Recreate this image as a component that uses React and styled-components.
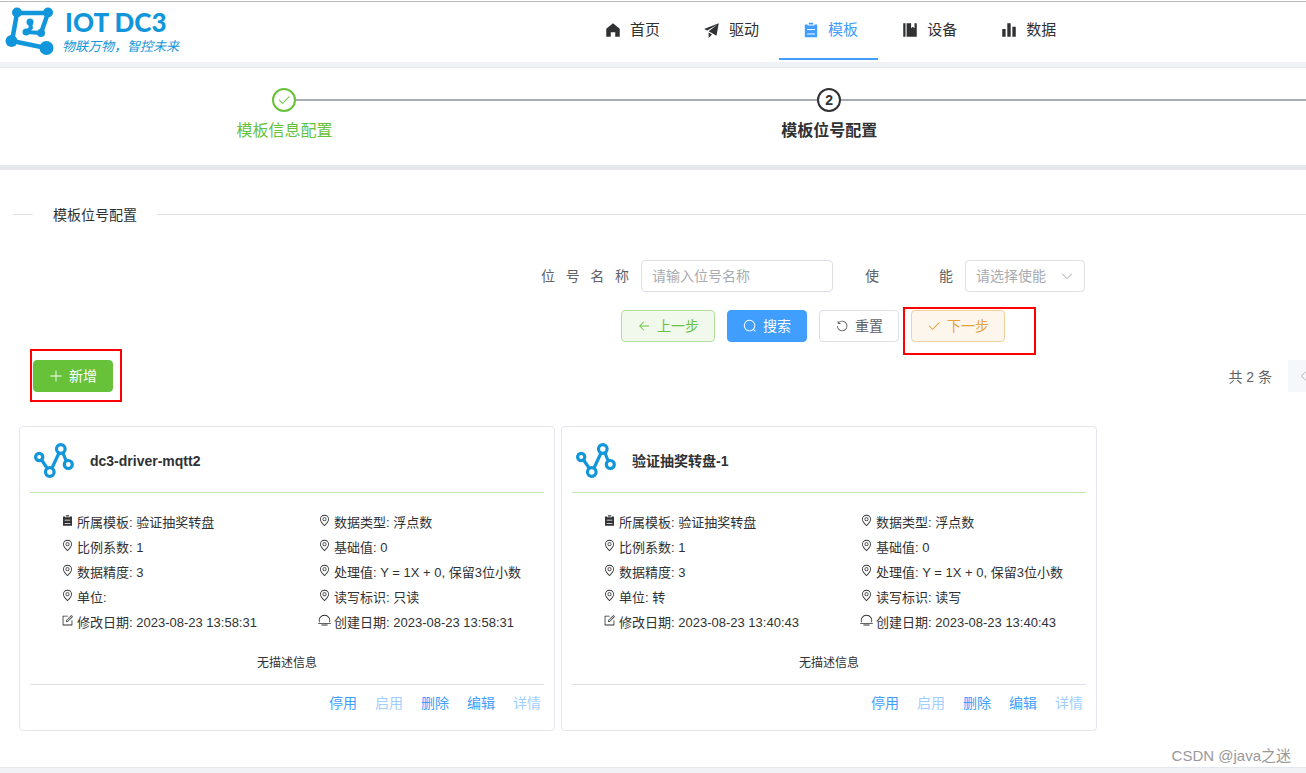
import React, { useState } from "react";
import styled, { createGlobalStyle } from "styled-components";

const GlobalStyle = createGlobalStyle`
  * {
    box-sizing: border-box;
  }

  body {
    margin: 0;
    background-color: #fff;
    color: #303133;
    font-family: "Liberation Sans", "Noto Sans CJK SC", sans-serif;
    font-size: 14px;
    overflow-x: hidden;
  }

  button, input, select {
    font-family: inherit;
    font-size: 14px;
  }
`;

// icon shapes, all on a 1024 grid
const ICONS = {
  home: ["M512 128 128 447.936V896h255.936V640H640v256h255.936V447.936z"],
  promotion: ["m64 448 832-320-128 704-446.08-243.328L832 192 242.816 545.472zm256 512V657.024L512 768z"],
  list: ["M704 192h160v736H160V192h160v64h384zM288 512h448v-64H288zm0 256h448v-64H288zm96-576V96h256v96z"],
  management: ["M576 128v288l96-96 96 96V128h128v768H320V128zm-448 0h128v768H128z"],
  histogram: ["M416 896V128h192v768zm-288 0V448h192v448zm576 0V320h192v576z"],
  check: [
    "M406.656 706.944 195.84 496.256a32 32 0 1 0-45.248 45.248l256 256 512-512a32 32 0 0 0-45.248-45.248L406.592 706.944z",
  ],
  back: [
    "M224 480h640a32 32 0 1 1 0 64H224a32 32 0 0 1 0-64",
    "m237.248 512 265.408 265.344a32 32 0 0 1-45.312 45.312l-288-288a32 32 0 0 1 0-45.312l288-288a32 32 0 1 1 45.312 45.312z",
  ],
  search: [
    "m795.904 750.72 124.992 124.928a32 32 0 0 1-45.248 45.248L750.656 795.904a416 416 0 1 1 45.248-45.248zM480 832a352 352 0 1 0 0-704 352 352 0 0 0 0 704",
  ],
  refresh: [
    "M289.088 296.704h92.992a32 32 0 0 1 0 64H232.96a32 32 0 0 1-32-32V179.712a32 32 0 0 1 64 0v50.56a384 384 0 0 1 643.84 282.88 384 384 0 0 1-383.936 384 384 384 0 0 1-384-384h64a320 320 0 1 0 640 0 320 320 0 0 0-555.712-216.448z",
  ],
  plus: ["M480 480V128a32 32 0 0 1 64 0v352h352a32 32 0 1 1 0 64H544v352a32 32 0 1 1-64 0V544H128a32 32 0 0 1 0-64z"],
  arrowDown: [
    "M831.872 340.864 512 652.672 192.128 340.864a30.592 30.592 0 0 0-42.752 0 29.12 29.12 0 0 0 0 41.6L489.664 714.24a32 32 0 0 0 44.672 0l340.288-331.712a29.12 29.12 0 0 0 0-41.728 30.592 30.592 0 0 0-42.752 0z",
  ],
  arrowLeft: [
    "M609.408 149.376 277.76 489.6a32 32 0 0 0 0 44.672l331.648 340.352a29.12 29.12 0 0 0 41.728 0 30.592 30.592 0 0 0 0-42.752L339.264 511.936l311.872-319.872a30.592 30.592 0 0 0 0-42.688 29.12 29.12 0 0 0-41.728 0z",
  ],
  location: [
    "M800 416a288 288 0 1 0-576 0c0 118.144 94.528 272.128 288 456.576C705.472 688.128 800 534.144 800 416M512 960C277.312 746.688 160 565.312 160 416a352 352 0 0 1 704 0c0 149.312-117.312 330.688-352 544",
    "M512 512a96 96 0 1 0 0-192 96 96 0 0 0 0 192m0 64a160 160 0 1 1 0-320 160 160 0 0 1 0 320",
  ],
  edit: [
    "M832 512a32 32 0 1 1 64 0v352a32 32 0 0 1-32 32H160a32 32 0 0 1-32-32V160a32 32 0 0 1 32-32h352a32 32 0 0 1 0 64H192v640h640z",
    "m469.952 554.24 52.8-7.552L847.104 222.4a32 32 0 1 0-45.248-45.248L477.44 501.44l-7.552 52.8zm422.4-422.4a96 96 0 0 1 0 135.808l-331.84 331.84a32 32 0 0 1-18.112 9.088L436.8 623.68a32 32 0 0 1-36.224-36.224l15.104-105.6a32 32 0 0 1 9.024-18.112l331.904-331.84a96 96 0 0 1 135.744 0z",
  ],
  sunset: [
    "M82.56 640a448 448 0 1 1 858.88 0h-67.2a384 384 0 1 0-724.288 0zM32 704h960q32 0 32 32t-32 32H32q-32 0-32-32t32-32m256 128h448q32 0 32 32t-32 32H288q-32 0-32-32t32-32",
  ],
};

const Icon = ({ name, size = 14 }) => (
  <svg width={size} height={size} viewBox="0 0 1024 1024" fill="currentColor" aria-hidden="true">
    {ICONS[name].map((d) => (
      <path key={d} d={d} />
    ))}
  </svg>
);

// ---------- header ----------
const Header = styled.header`
  display: flex;
  align-items: flex-start;
  justify-content: space-between;
  height: 61px;
  margin-top: 1px;
  border-top: 1px solid #b9b9b9;
`;

const Brand = styled.a`
  display: flex;
  gap: 8px;
  padding: 5px 0 0 5px;
  color: #1296db;
  text-decoration: none;
`;

const BrandText = styled.span`
  display: flex;
  flex-direction: column;
`;

const BrandName = styled.span`
  padding-left: 3px;
  font-family: Lato, sans-serif;
  font-size: 26px;
  font-weight: 900;
  line-height: 30px;
`;

const BrandSlogan = styled.span`
  font-family: "Noto Sans CJK SC", sans-serif;
  font-size: 13px;
  font-style: italic;
  font-weight: 400;
  line-height: 18px;
  white-space: nowrap;
`;

const Nav = styled.nav`
  display: flex;
  margin-right: 17.6%;
`;

const NavLink = styled.a`
  display: flex;
  align-items: center;
  height: 58px;
  padding: 0 20px;
  border-bottom: 2px solid ${(props) => (props.$active ? "#409eff" : "transparent")};
  color: ${(props) => (props.$active ? "#409eff" : "#303133")};
  font-size: 15px;
  text-decoration: none;
`;

const NavIcon = styled.span`
  display: flex;
  justify-content: center;
  width: 24px;
  margin-right: 5px;
`;

const NavText = styled.span`
  padding-bottom: 3px;
`;

const Band = styled.div`
  height: ${(props) => (props.$strong ? "5px" : "6px")};
  background-color: ${(props) => (props.$strong ? "#e6e8eb" : "#f0f2f5")};
  border-bottom: ${(props) => (props.$strong ? "none" : "1px solid #e4e7ed")};
`;

const PageEnd = styled.div`
  height: 6px;
  background-color: #f0f2f5;
  border-top: 1px solid #e4e7ed;
`;

// ---------- steps ----------
const Steps = styled.ol`
  display: grid;
  grid-template-columns: 42.1% 42.1% 1fr;
  margin: 0;
  padding: 20px 0 15px 12px;
  list-style: none;
`;

const Step = styled.li`
  color: ${(props) => (props.$done ? "#67c23a" : "#303133")};
  font-weight: ${(props) => (props.$done ? 400 : 700)};
`;

const StepHead = styled.div`
  display: flex;
  align-items: center;
  height: 24px;
`;

const StepLine = styled.span`
  flex: 1;
  height: 2px;
  background-color: ${(props) => (props.$hidden ? "transparent" : "#a8abb2")};
`;

const StepCircle = styled.span`
  display: flex;
  align-items: center;
  justify-content: center;
  width: 24px;
  height: 24px;
  border: 2px solid currentColor;
  border-radius: 50%;
  font-size: 14px;
`;

const StepTitle = styled.div`
  font-size: 16px;
  line-height: 38px;
  text-align: center;
`;

// ---------- content ----------
const Content = styled.main`
  padding: 34px 0 36px;
`;

const SectionTitle = styled.h2`
  display: flex;
  align-items: center;
  gap: 20px;
  margin: 0 0 34px 13px;
  font-size: 14px;
  font-weight: 400;
  line-height: 22px;

  &::before,
  &::after {
    content: "";
    width: 20px;
    height: 1px;
    margin-bottom: 2px;
    background-color: #dcdfe6;
  }

  &::after {
    flex: 1;
  }
`;

const SearchForm = styled.form`
  display: flex;
  flex-direction: column;
  align-items: center;
  gap: 18px;
  padding-left: 24.5%;
`;

const FormRow = styled.div`
  display: flex;
  gap: ${(props) => props.$gap};
`;

const Field = styled.div`
  display: flex;
  gap: 12px;
`;

const Label = styled.label`
  width: 88px;
  color: #606266;
  line-height: 32px;
  text-align: justify;
  text-align-last: justify;
`;

const TextInput = styled.input`
  width: 192px;
  height: 32px;
  padding: 0 10px;
  border: 1px solid #dcdfe6;
  border-radius: 4px;
  outline: none;

  &::placeholder {
    color: #a8abb2;
  }
`;

const SelectBox = styled.div`
  position: relative;
  color: #a8abb2;

  svg {
    position: absolute;
    top: 9px;
    right: 11px;
    pointer-events: none;
  }
`;

const Select = styled.select`
  appearance: none;
  width: 120px;
  height: 32px;
  padding: 0 10px;
  border: 1px solid #dcdfe6;
  border-radius: 4px;
  background-color: #fff;
  color: #a8abb2;
`;

const VARIANTS = {
  back: { color: "#67c23a", background: "#f0f9eb", border: "#b3e19d" },
  primary: { color: "#fff", background: "#409eff", border: "#409eff" },
  plain: { color: "#606266", background: "#fff", border: "#dcdfe6" },
  next: { color: "#e6a23c", background: "#fdf6ec", border: "#f3d19e" },
  success: { color: "#fff", background: "#67c23a", border: "#67c23a" },
};

const Button = styled.button`
  display: flex;
  align-items: center;
  gap: 6px;
  height: 32px;
  padding: 0 15px;
  border: 1px solid ${(props) => VARIANTS[props.$variant].border};
  border-radius: 4px;
  background-color: ${(props) => VARIANTS[props.$variant].background};
  color: ${(props) => VARIANTS[props.$variant].color};
  line-height: 20px;
  cursor: pointer;
`;

// red frame drawn over the page around a button
const Marked = styled.div`
  position: relative;

  &::after {
    content: "";
    position: absolute;
    inset: ${(props) => props.$inset};
    border: 2px solid #f00;
    pointer-events: none;
  }
`;

const Toolbar = styled.div`
  display: flex;
  align-items: center;
  justify-content: space-between;
  margin: 18px 0 34px;
  padding-left: 33px;
`;

const Pagination = styled.div`
  display: flex;
  align-items: center;
  gap: 16px;
  margin-right: -14px;
  color: #606266;
`;

const PageButton = styled.button`
  display: flex;
  align-items: center;
  justify-content: center;
  width: 32px;
  height: 32px;
  padding: 0;
  border: none;
  border-radius: 2px;
  background-color: #f5f7fa;
  color: #a8abb2;
`;

// ---------- cards ----------
const CardGrid = styled.div`
  display: grid;
  grid-template-columns: repeat(2, 41.65%);
  gap: 6px;
  padding-left: 19px;
`;

const Card = styled.article`
  padding: 0 10px 9px;
  border: 1px solid #e4e7ed;
  border-radius: 4px;
`;

const CardHeader = styled.div`
  display: flex;
  align-items: center;
  gap: 16px;
  height: 66px;
  padding: 0 4px;
  border-bottom: 1px solid #c2e7b0;
`;

const CardTitle = styled.h3`
  margin: 0;
  padding-top: 2px;
  font-size: 14px;
  font-weight: 700;
  line-height: 20px;
`;

const InfoList = styled.ul`
  display: grid;
  grid-template-columns: 1fr 1fr;
  margin: 0;
  padding: 17px 0 0;
  list-style: none;
`;

const InfoItem = styled.li`
  display: flex;
  align-items: center;
  gap: 3px;
  padding-left: 31px;
  font-size: 13px;
  line-height: 25px;
  white-space: nowrap;

  svg {
    margin-bottom: 4px;
  }
`;

const Description = styled.p`
  margin: 18px 0 11px;
  font-size: 12px;
  line-height: 20px;
  text-align: center;
`;

const CardFooter = styled.div`
  display: flex;
  justify-content: flex-end;
  gap: 18px;
  padding-right: 3px;
  border-top: 1px solid #dcdfe6;
`;

const TextButton = styled.button`
  height: 36px;
  padding: 0 0 2px;
  border: none;
  background: none;
  color: #409eff;
  cursor: pointer;

  &:disabled {
    color: #a0cfff;
    cursor: not-allowed;
  }
`;

const Watermark = styled.span`
  position: absolute;
  right: 15px;
  bottom: 7px;
  color: #999;
  font-size: 15px;
  line-height: 20px;
`;

const Page = styled.div`
  position: relative;
  display: flow-root;
  overflow: hidden;
`;

const NAV_ITEMS = [
  { icon: "home", label: "首页" },
  { icon: "promotion", label: "驱动" },
  { icon: "list", label: "模板", active: true },
  { icon: "management", label: "设备" },
  { icon: "histogram", label: "数据" },
];

const POINTS = [
  { name: "dc3-driver-mqtt2", unit: "", access: "只读", date: "2023-08-23 13:58:31" },
  { name: "验证抽奖转盘-1", unit: "转", access: "读写", date: "2023-08-23 13:40:43" },
];

const LogoMark = () => (
  <svg width="49" height="50" viewBox="0 0 49 50" fill="none" stroke="#1296db" aria-hidden="true">
    <path d="M36 26 43 6 12 6 7 34 41 41" strokeWidth="4.5" />
    <path d="M25 16 26 21 21 25 36 26" strokeWidth="4" strokeLinejoin="round" />
    <g fill="#1296db" stroke="none">
      <circle cx="12" cy="5.500" r="5" />
      <circle cx="43" cy="5.500" r="5" />
      <circle cx="6.500" cy="34" r="6" />
      <circle cx="41.500" cy="41" r="7" />
      <circle cx="25" cy="15" r="3.500" />
      <circle cx="21" cy="25" r="3.500" />
      <circle cx="36" cy="26" r="4" />
    </g>
  </svg>
);

const PointMark = () => (
  <svg width="40" height="36" viewBox="0 0 40 36" fill="none" stroke="#1296db" strokeWidth="3.2" aria-hidden="true">
    <path d="M8 18.500 13 26M18 26 25 11M29 11 32 18.500" />
    <circle cx="5.200" cy="15" r="3.600" />
    <circle cx="15.800" cy="30" r="4.300" />
    <circle cx="26.800" cy="7" r="4.300" />
    <circle cx="34.300" cy="22.500" r="4" />
  </svg>
);

const PointCard = ({ point }) => {
  const rows = [
    ["list", "所属模板: 验证抽奖转盘"],
    ["location", "数据类型: 浮点数"],
    ["location", "比例系数: 1"],
    ["location", "基础值: 0"],
    ["location", "数据精度: 3"],
    ["location", "处理值: Y = 1X + 0, 保留3位小数"],
    ["location", `单位: ${point.unit}`],
    ["location", `读写标识: ${point.access}`],
    ["edit", `修改日期: ${point.date}`],
    ["sunset", `创建日期: ${point.date}`],
  ];

  return (
    <Card>
      <CardHeader>
        <PointMark />
        <CardTitle>{point.name}</CardTitle>
      </CardHeader>
      <InfoList>
        {rows.map(([icon, text]) => (
          <InfoItem key={text}>
            <Icon name={icon} size={13} />
            {text}
          </InfoItem>
        ))}
      </InfoList>
      <Description>无描述信息</Description>
      <CardFooter>
        <TextButton>停用</TextButton>
        <TextButton disabled>启用</TextButton>
        <TextButton>删除</TextButton>
        <TextButton>编辑</TextButton>
        <TextButton disabled>详情</TextButton>
      </CardFooter>
    </Card>
  );
};

const App = () => {
  const [name, setName] = useState("");

  return (
    <Page>
      <GlobalStyle />
      <Header>
        <Brand href="#">
          <LogoMark />
          <BrandText>
            <BrandName>IOT DC3</BrandName>
            <BrandSlogan>物联万物，智控未来</BrandSlogan>
          </BrandText>
        </Brand>
        <Nav>
          {NAV_ITEMS.map((item) => (
            <NavLink key={item.label} href="#" $active={item.active}>
              <NavIcon>
                <Icon name={item.icon} size={18} />
              </NavIcon>
              <NavText>{item.label}</NavText>
            </NavLink>
          ))}
        </Nav>
      </Header>
      <Band />

      <Steps>
        <Step $done>
          <StepHead>
            <StepLine $hidden />
            <StepCircle>
              <Icon name="check" size={14} />
            </StepCircle>
            <StepLine />
          </StepHead>
          <StepTitle>模板信息配置</StepTitle>
        </Step>
        <Step>
          <StepHead>
            <StepLine />
            <StepCircle>2</StepCircle>
            <StepLine />
          </StepHead>
          <StepTitle>模板位号配置</StepTitle>
        </Step>
        <Step aria-hidden="true">
          <StepHead>
            <StepLine />
          </StepHead>
        </Step>
      </Steps>
      <Band $strong />

      <Content>
        <SectionTitle>模板位号配置</SectionTitle>
        <SearchForm onSubmit={(e) => e.preventDefault()}>
          <FormRow $gap="32px">
            <Field>
              <Label htmlFor="pointName">位号名称</Label>
              <TextInput
                id="pointName"
                placeholder="请输入位号名称"
                value={name}
                onChange={(e) => setName(e.target.value)}
              />
            </Field>
            <Field>
              <Label htmlFor="enable">使能</Label>
              <SelectBox>
                <Select id="enable" defaultValue="">
                  <option value="">请选择使能</option>
                </Select>
                <Icon name="arrowDown" />
              </SelectBox>
            </Field>
          </FormRow>
          <FormRow $gap="12px">
            <Button type="button" $variant="back">
              <Icon name="back" />
              上一步
            </Button>
            <Button type="submit" $variant="primary">
              <Icon name="search" />
              搜索
            </Button>
            <Button type="reset" $variant="plain" onClick={() => setName("")}>
              <Icon name="refresh" />
              重置
            </Button>
            <Marked $inset="-3px -31px -13px -8px">
              <Button type="button" $variant="next">
                <Icon name="check" />
                下一步
              </Button>
            </Marked>
          </FormRow>
        </SearchForm>

        <Toolbar>
          <Marked $inset="-11px -9px -10px -3px">
            <Button type="button" $variant="success">
              <Icon name="plus" />
              新增
            </Button>
          </Marked>
          <Pagination>
            <span>共 2 条</span>
            <PageButton type="button" aria-label="上一页" disabled>
              <Icon name="arrowLeft" size={12} />
            </PageButton>
          </Pagination>
        </Toolbar>

        <CardGrid>
          {POINTS.map((point) => (
            <PointCard key={point.name} point={point} />
          ))}
        </CardGrid>
      </Content>
      <PageEnd />
      <Watermark>CSDN @java之迷</Watermark>
    </Page>
  );
};

export default App;
